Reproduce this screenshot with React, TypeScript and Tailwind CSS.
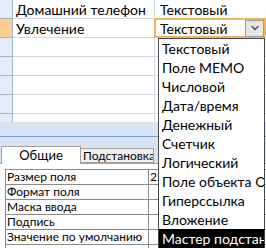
import { ChevronDown } from "lucide-react"

const fieldRows = [
  { name: "Домашний телефон", type: "Текстовый" },
  { name: "Увлечение", type: "Текстовый", active: true },
  { name: "", type: "" },
  { name: "", type: "" },
  { name: "", type: "" },
  { name: "", type: "" },
  { name: "", type: "" },
]

const dataTypes = [
  "Текстовый",
  "Поле MEMO",
  "Числовой",
  "Дата/время",
  "Денежный",
  "Счетчик",
  "Логический",
  "Поле объекта OLE",
  "Гиперссылка",
  "Вложение",
  "Мастер подстановок...",
]

const props = ["Размер поля", "Формат поля", "Маска ввода", "Подпись", "Значение по умолчанию", "Условие на значение"]

export default function App() {
  return (
    <div className="relative w-[266px] h-[248px] overflow-hidden bg-white text-black font-['Lato','Open_Sans',sans-serif]">
      {/* Field grid */}
      <div className="h-[122px] overflow-hidden">
        {fieldRows.map((row, i) => (
          <div key={i} className="flex h-[19px] border-b border-[#d0d7e5]">
            <div
              className={`w-[13px] shrink-0 border-r border-b border-[#9eb6ce] -mb-px ${
                row.active ? "bg-[#fcd08a]" : "bg-[#e4ecf7]"
              }`}
            />
            <div className="w-[142px] shrink-0 border-r border-[#d0d7e5] pl-[3px] text-[14px] leading-[19px] whitespace-nowrap overflow-hidden">
              {row.name}
            </div>
            <div className="relative flex-1 pl-[5px] text-[14px] leading-[19px] whitespace-nowrap">
              {row.active ? (
                <div className="absolute -left-px -top-px right-0 -bottom-px flex items-center border-2 border-[#f5b35a] bg-white pl-[4px]">
                  <span className="flex-1">{row.type}</span>
                  <span className="flex items-center justify-center w-[19px] h-[17px] bg-[#e6e6e6] border border-[#9a9a9a]">
                    <ChevronDown className="w-[12px] h-[12px] text-[#555]" strokeWidth={3} />
                  </span>
                </div>
              ) : (
                row.type
              )}
            </div>
          </div>
        ))}
      </div>

      {/* Lower pane header band */}
      <div className="h-[24px] bg-[#d5e3f3] flex flex-col">
        <div className="h-[14px]" />
        <div className="h-px bg-[#7499cf]" />
      </div>

      {/* Tabs */}
      <div className="flex h-[17px] bg-[#d5e3f3] pl-[1px]">
        <div className="w-[80px] h-[18px] bg-white border border-b-0 border-[#a0a0a0] text-[13px] leading-[17px] text-center z-10">
          Общие
        </div>
        <div className="mt-[2px] w-[73px] h-[15px] bg-[#f0f0f0] border border-l-0 border-[#a0a0a0] text-[12px] leading-[14px] pl-[2px] whitespace-nowrap overflow-hidden">
          Подстановка
        </div>
        <div className="flex-1" />
      </div>

      {/* Properties */}
      <div className="bg-white border-t border-[#a0a0a0] pt-[5px] pl-[5px] h-[90px]">
        <div className="border-t border-l border-[#8a8a8a]">
          {props.map((p, i) => (
            <div key={p} className="flex h-[15px] border-b border-[#8a8a8a]">
              <div className="w-[143px] shrink-0 border-r border-[#8a8a8a] pl-[1px] text-[12px] leading-[14px] whitespace-nowrap overflow-hidden">
                {p}
              </div>
              <div className="w-[9px] pl-[1px] text-[12px] leading-[14px] overflow-hidden">{i === 0 ? "25" : ""}</div>
            </div>
          ))}
        </div>
      </div>

      {/* Data type dropdown list */}
      <div className="absolute left-[158px] top-[38px] w-[107px] h-[212px] bg-white border border-[#4a4a4a] overflow-hidden">
        {dataTypes.map((t, i) => (
          <div
            key={t}
            className={`h-[19px] pl-[3px] text-[14px] leading-[19px] whitespace-nowrap ${
              i === dataTypes.length - 1 ? "bg-black text-white" : ""
            }`}
          >
            {t}
          </div>
        ))}
      </div>
    </div>
  )
}
